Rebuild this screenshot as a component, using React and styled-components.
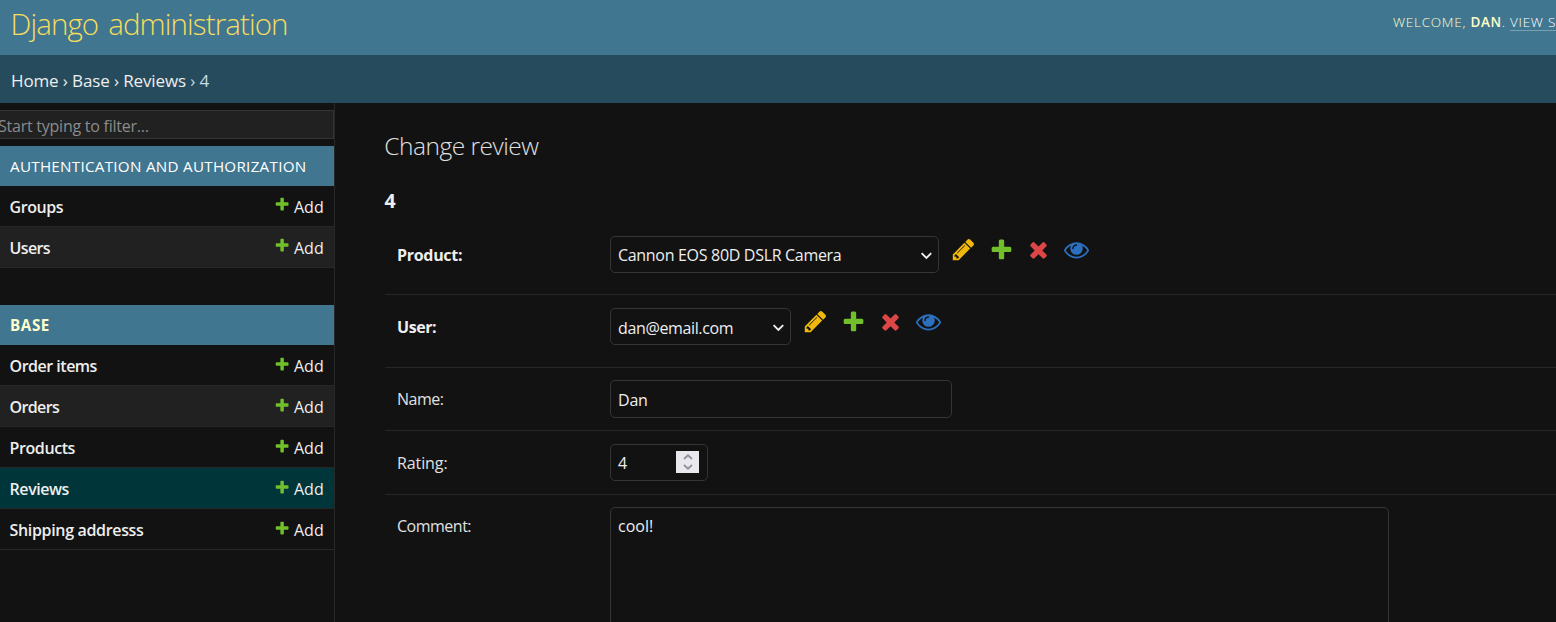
import React from "react";
import styled, { createGlobalStyle } from "styled-components";

const Global = createGlobalStyle`
  *, *::before, *::after { box-sizing: border-box; }
  html, body, #root { height: 100%; }
  body {
    margin: 0;
    overflow: hidden;
    background: #121212;
    color: #eeeeee;
    font-family: "Open Sans", "Noto Sans", sans-serif;
    font-size: 16px;
  }
  h1, h2, p { margin: 0; }
`;

const Page = styled.div`
  display: flex;
  flex-direction: column;
  height: 100vh;
  overflow: hidden;
`;

const Header = styled.header`
  display: flex;
  justify-content: space-between;
  flex: 0 0 55px;
  padding-left: 10.5px;
  background: #417690;
  overflow: hidden;
`;

const SiteName = styled.h1`
  font-size: 29.5px;
  font-weight: 300;
  line-height: 48px;
  letter-spacing: -0.9px;
  word-spacing: 3.2px;
  color: #f5dd5d;
  white-space: nowrap;
`;

const UserTools = styled.div`
  flex: 0 0 163px;
  min-width: 0;
  font-size: 13.5px;
  font-weight: 300;
  line-height: 45px;
  letter-spacing: 0.75px;
  color: #ffffcc;
  text-transform: uppercase;
  white-space: nowrap;

  strong {
    font-weight: 600;
    letter-spacing: 0.65px;
  }
`;

const ToolLink = styled.span`
  display: inline-block;
  padding-right: 2px;
  line-height: 16px;
  color: #ffffff;
  border-bottom: 1px solid rgba(255, 255, 255, 0.3);
`;

const Breadcrumbs = styled.nav`
  flex: 0 0 48px;
  padding: 4px 0 0 11px;
  background: #264b5d;
  color: #eeeeee;
  font-size: 17px;
  line-height: 44px;
  letter-spacing: -0.13px;
  white-space: pre;

  span { color: #c4dce8; }
`;

const Body = styled.div`
  display: flex;
  flex: 1;
  min-height: 0;
`;

const Sidebar = styled.aside`
  flex: 0 0 335px;
  padding-top: 7px;
  border-right: 1px solid #272727;
`;

const Filter = styled.div`
  height: 29px;
  margin-bottom: 7px;
  border: 1px solid #353535;
  border-left: 0;
  background: #212121;
  color: #8b8b8b;
  line-height: 30px;
  letter-spacing: -0.24px;
  text-indent: -2px;
`;

const Module = styled.section`
  margin-bottom: 37px;
`;

const Caption = styled.h2`
  height: 40px;
  padding-left: 10px;
  background: #417690;
  color: ${(p) => (p.$current ? "#ffffcc" : "#ffffff")};
  font-size: 15.2px;
  font-weight: ${(p) => (p.$current ? 700 : 400)};
  line-height: 40px;
  letter-spacing: ${(p) => (p.$current ? 0.6 : 0.28)}px;
  text-transform: uppercase;
  white-space: nowrap;
`;

const ModelRow = styled.div`
  display: flex;
  justify-content: space-between;
  height: 41px;
  padding-left: 9.6px;
  border-bottom: 1px solid #272727;
  background: ${(p) => (p.$current ? "#00363a" : p.$alt ? "#212121" : "#121212")};
  line-height: 42px;
`;

const ModelName = styled.span`
  font-weight: 600;
  letter-spacing: ${(p) => p.$tracking}px;
`;

const AddLink = styled.span`
  display: flex;
  flex: 0 0 60px;
  gap: 3.75px;

  svg { margin-top: ${(p) => p.$iconTop}px; }
`;

const Content = styled.main`
  flex: 1;
  min-width: 0;
  padding: 20px 0 0 50px;
  overflow: hidden;
`;

const PageTitle = styled.h1`
  font-size: 24.5px;
  font-weight: 300;
  line-height: 45px;
  letter-spacing: -0.5px;
  color: #e0e0e0;
  text-indent: -0.7px;
`;

const ObjectTitle = styled.h2`
  margin: 16px 0 6px;
  font-size: 19.5px;
  font-weight: 700;
  line-height: 33px;
  text-indent: -0.5px;
`;

const FormRow = styled.div`
  display: flex;
  align-items: flex-start;
  height: ${(p) => p.$height}px;
  padding: ${(p) => p.$top}px 0 0 12px;
  border-bottom: 1px solid #272727;
`;

const Label = styled.label`
  flex: 0 0 213px;
  line-height: 39px;
  font-weight: ${(p) => (p.$required ? 700 : 400)};
  letter-spacing: ${(p) => p.$tracking}px;
  color: ${(p) => (p.$required ? "#eeeeee" : "#e0e0e0")};
`;

const Field = styled.div`
  display: flex;
  justify-content: space-between;
  flex: 0 0 ${(p) => p.$width}px;
  height: ${(p) => p.$height || 37}px;
  padding: ${(p) => p.$drop || 0}px 8px 0 7px;
  border: 1px solid #353535;
  border-radius: 5px;
  line-height: 36px;
  letter-spacing: ${(p) => p.$tracking || 0}px;
  white-space: nowrap;
`;

const Chevron = styled.svg`
  flex: none;
  width: 12px;
  height: 8px;
  margin: ${(p) => p.$top}px -2px 0 0;
`;

const Stepper = styled.span`
  display: flex;
  flex-direction: column;
  align-items: center;
  justify-content: space-between;
  width: 23px;
  height: 22px;
  margin-top: 6px;
  padding: 3px 0;
  background: #e9e9ed;
`;

const RelatedLinks = styled.div`
  display: flex;
  gap: 12.5px;
  padding: 1px 0 0 12px;
`;

const iconPaths = {
  change: {
    color: "#efb80b",
    d: "M491 1536l91-91-235-235-91 91v107h128v128h107zm523-928q0-22-22-22-10 0-17 7l-542 542q-7 7-7 17 0 22 22 22 10 0 17-7l542-542q7-7 7-17zm-54-192l416 416-832 832h-416v-416zm683 96q0 53-37 90l-166 166-416-416 166-165q36-38 90-38 53 0 91 38l235 234q37 39 37 91z",
  },
  add: {
    color: "#70bf2b",
    d: "M1600 796v192q0 40-28 68t-68 28h-416v416q0 40-28 68t-68 28h-192q-40 0-68-28t-28-68v-416h-416q-40 0-68-28t-28-68v-192q0-40 28-68t68-28h416v-416q0-40 28-68t68-28h192q40 0 68 28t28 68v416h416q40 0 68 28t28 68z",
  },
  remove: {
    color: "#dd4646",
    d: "M1490 1322q0 40-28 68l-136 136q-28 28-68 28t-68-28l-294-294-294 294q-28 28-68 28t-68-28l-136-136q-28-28-28-68t28-68l294-294-294-294q-28-28-28-68t28-68l136-136q28-28 68-28t68 28l294 294 294-294q28-28 68-28t68 28l136 136q28 28 28 68t-28 68l-294 294 294 294q28 28 28 68z",
  },
  view: {
    color: "#2b70bf",
    d: "M1664 960q-152-236-381-353 61 104 61 225 0 185-131.5 316.5t-316.5 131.5-316.5-131.5-131.5-316.5q0-121 61-225-229 117-381 353 133 205 333.5 326.5t434.5 121.5 434.5-121.5 333.5-326.5zm-720-384q0-20-14-34t-34-14q-125 0-214.5 89.5t-89.5 214.5q0 20 14 34t34 14 34-14 14-34q0-86 61-147t147-61q20 0 34-14t14-34zm848 384q0 34-20 69-140 230-376.5 368.5t-499.5 138.5-499.5-139-376.5-368q-20-35-20-69t20-69q140-229 376.5-368t499.5-139 499.5 139 376.5 368q20 35 20 69z",
  },
};

function Icon({ name, size }) {
  const { color, d } = iconPaths[name];
  return (
    <svg width={size} height={size} viewBox="0 0 1792 1792">
      <path fill={color} d={d} />
    </svg>
  );
}

function Related() {
  return (
    <RelatedLinks>
      {["change", "add", "remove", "view"].map((name) => (
        <Icon key={name} name={name} size={25} />
      ))}
    </RelatedLinks>
  );
}

function SelectArrow({ top }) {
  return (
    <Chevron $top={top} viewBox="0 0 12 8">
      <path d="M1.6 1.2 L6.4 6 L11.2 1.2" fill="none" stroke="#eeeeee" strokeWidth="1.9" />
    </Chevron>
  );
}

function StepArrow({ d }) {
  return (
    <svg width="10" height="6" viewBox="0 0 10 6">
      <path d={d} fill="none" stroke="#9191a0" strokeWidth="1.9" />
    </svg>
  );
}

const apps = [
  {
    name: "Authentication and Authorization",
    models: [
      { name: "Groups", tracking: -0.45 },
      { name: "Users", tracking: -0.65 },
    ],
  },
  {
    name: "Base",
    current: true,
    models: [
      { name: "Order items", tracking: -0.5 },
      { name: "Orders", tracking: -0.65 },
      { name: "Products", tracking: -0.42 },
      { name: "Reviews", tracking: -0.45 },
      { name: "Shipping addresss", tracking: -0.34 },
    ],
  },
];

const currentModel = "Reviews";

export default function App() {
  return (
    <Page>
      <Global />
      <Header>
        <SiteName>Django administration</SiteName>
        <UserTools>
          Welcome, <strong>Dan</strong>. <ToolLink>View s</ToolLink>
        </UserTools>
      </Header>
      <Breadcrumbs>Home › Base › Reviews <span>› 4</span></Breadcrumbs>
      <Body>
        <Sidebar>
          <Filter>Start typing to filter...</Filter>
          {apps.map((app) => (
            <Module key={app.name}>
              <Caption $current={app.current}>{app.name}</Caption>
              {app.models.map((model, i) => (
                <ModelRow
                  key={model.name}
                  $alt={i % 2 === 1}
                  $current={model.name === currentModel}
                >
                  <ModelName $tracking={model.tracking}>{model.name}</ModelName>
                  <AddLink $iconTop={app.current ? 10.7 : 10.2}>
                    <Icon name="add" size={16.25} />
                    Add
                  </AddLink>
                </ModelRow>
              ))}
            </Module>
          ))}
        </Sidebar>
        <Content>
          <PageTitle>Change review</PageTitle>
          <ObjectTitle>4</ObjectTitle>
          <FormRow $height={72} $top={13}>
            <Label $required $tracking={-0.3}>Product:</Label>
            <Field $width={329} $tracking={-0.31}>
              Cannon EOS 80D DSLR Camera
              <SelectArrow top={15} />
            </Field>
            <Related />
          </FormRow>
          <FormRow $height={73} $top={13}>
            <Label $required $tracking={-0.45}>User:</Label>
            <Field $width={181} $tracking={-0.36} $drop={1}>
              dan@email.com
              <SelectArrow top={14} />
            </Field>
            <Related />
          </FormRow>
          <FormRow $height={63} $top={12}>
            <Label $tracking={-0.5}>Name:</Label>
            <Field $width={342} $height={38} $tracking={-0.2} $drop={1}>Dan</Field>
          </FormRow>
          <FormRow $height={64} $top={13}>
            <Label $tracking={-0.1}>Rating:</Label>
            <Field $width={98}>
              4
              <Stepper>
                <StepArrow d="M1 5 L5 1.4 L9 5" />
                <StepArrow d="M1 1 L5 4.6 L9 1" />
              </Stepper>
            </Field>
          </FormRow>
          <FormRow $height={260} $top={12}>
            <Label $tracking={-0.5}>Comment:</Label>
            <Field $width={779} $height={240}>cool!</Field>
          </FormRow>
        </Content>
      </Body>
    </Page>
  );
}
